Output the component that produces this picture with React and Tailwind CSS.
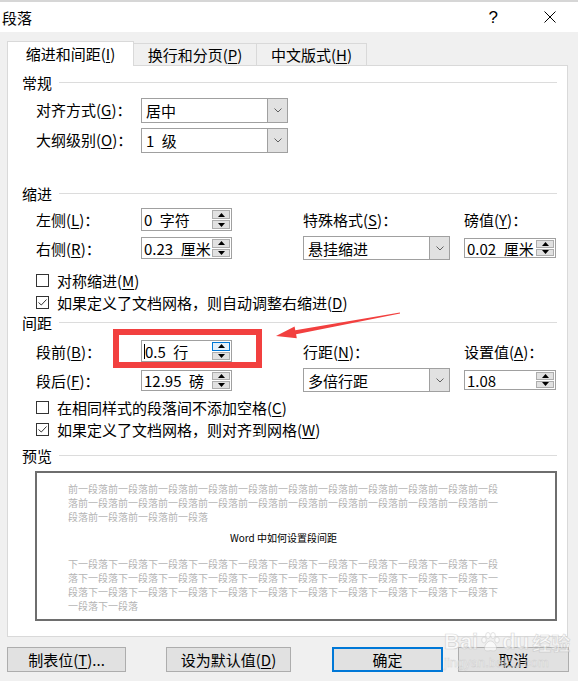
import React from "react";

const Key = ({ k }) => <span className="underline underline-offset-[2px]">{k}</span>;

// 带助记键的标签
const Lbl = ({ t, k, colon = true }) => (
  <span className="whitespace-nowrap leading-none">
    {t}(<Key k={k} />){colon ? "：" : ""}
  </span>
);

const SP = "\u2002";

function Spinner({ value, className, active, caret }) {
  return (
    <div className={`flex border border-[#a0a0a0] bg-white ${className}`}>
      <div className="flex-1 flex items-center pl-[2px] leading-none whitespace-nowrap overflow-hidden">
        {caret && <span className="w-px h-[15px] bg-black" />}
        {value}
      </div>
      <div className="flex flex-col w-[19px] py-[1px] pr-[1px] gap-px">
        <div
          className={`flex-1 flex items-center justify-center border ${
            active ? "border-[#0078d7] bg-[#e5f1fb]" : "border-[#adadad] bg-[#e1e1e1]"
          }`}
        >
          <svg width="7" height="4" viewBox="0 0 7 4">
            <path d="M0 4L3.5 0L7 4Z" fill="#000" />
          </svg>
        </div>
        <div className="flex-1 flex items-center justify-center border border-[#adadad] bg-[#e1e1e1]">
          <svg width="7" height="4" viewBox="0 0 7 4">
            <path d="M0 0L7 0L3.5 4Z" fill="#000" />
          </svg>
        </div>
      </div>
    </div>
  );
}

function Select({ value, className }) {
  return (
    <div className={`flex border border-[#a0a0a0] bg-white ${className}`}>
      <div className="flex-1 flex items-center pl-[4px] leading-none whitespace-nowrap">{value}</div>
      <div className="w-[20px] flex items-center justify-center bg-[#e1e1e1] border-l border-[#a0a0a0]">
        <svg width="8" height="5" viewBox="0 0 8 5">
          <path d="M0.5 0.5L4 4L7.5 0.5" fill="none" stroke="#606060" />
        </svg>
      </div>
    </div>
  );
}

function Check({ checked, children }) {
  return (
    <div className="flex items-center h-[22px] ml-[14px]">
      <div className="w-[13px] h-[13px] border border-[#333] bg-white flex items-center justify-center">
        {checked && (
          <svg width="9" height="7" viewBox="0 0 9 7">
            <path d="M0.5 3.5L3.3 6L8.5 0.5" fill="none" stroke="#333" />
          </svg>
        )}
      </div>
      <span className="ml-[8px] whitespace-nowrap leading-none">{children}</span>
    </div>
  );
}

function Section({ title, className }) {
  return (
    <div className={`flex items-center h-[16px] ${className}`}>
      <span className="leading-none">{title}</span>
      <div className="flex-1 h-px bg-[#dcdcdc] ml-[7px] mr-[10px]" />
    </div>
  );
}

function Btn({ children, className, primary }) {
  return (
    <div
      className={`h-[25px] flex items-center justify-center bg-[#e1e1e1] leading-none ${
        primary ? "border-2 border-[#0078d7]" : "border border-[#adadad]"
      } ${className}`}
    >
      {children}
    </div>
  );
}

const prev = "前一段落".repeat(25);
const next = "下一段落".repeat(34);

export default function App() {
  return (
    <div className="relative w-[578px] h-[681px] overflow-hidden bg-[#f0f0f0] text-black text-[15px] font-['Noto_Sans_CJK_SC','Noto_Sans',sans-serif]">
      {/* 顶部残留 */}
      <div className="h-[2px] bg-[#d6d6d6]" />
      {/* 标题栏 */}
      <div className="h-[30px] bg-white flex items-center">
        <span className="ml-[2px] leading-none">段落</span>
        <span className="ml-auto mr-[46px] leading-none text-[17px] font-['Liberation_Sans',sans-serif] font-light">?</span>
        <svg width="12" height="12" viewBox="0 0 12 12" className="mr-[22px]">
          <path d="M0.5 0.5L11.5 11.5M11.5 0.5L0.5 11.5" stroke="#000" strokeWidth="1" />
        </svg>
      </div>

      {/* 标签页 */}
      <div className="flex items-end ml-[7px] mt-[9px] h-[24px]">
        <div className="relative z-10 -mb-px h-[25px] w-[127px] bg-white border-t border-l border-r border-[#d9d9d9] flex items-center justify-center pb-[2px]">
          <Lbl t="缩进和间距" k="I" colon={false} />
        </div>
        <div className="h-[22px] w-[123px] border-t border-r border-[#d9d9d9] flex items-center justify-center">
          <Lbl t="换行和分页" k="P" colon={false} />
        </div>
        <div className="h-[22px] w-[110px] border-t border-r border-[#d9d9d9] flex items-center justify-center">
          <Lbl t="中文版式" k="H" colon={false} />
        </div>
      </div>

      {/* 面板 */}
      <div className="ml-[7px] w-[561px] h-[572px] bg-white border border-[#d9d9d9] pl-[14px] pt-[8px]">
        <Section title="常规" />
        <div className="ml-[14px] mt-[8px] flex items-center h-[25px]">
          <div className="w-[105px]"><Lbl t="对齐方式" k="G" /></div>
          <Select value="居中" className="w-[147px] h-[25px]" />
        </div>
        <div className="ml-[14px] mt-[5px] flex items-center h-[25px]">
          <div className="w-[105px]"><Lbl t="大纲级别" k="O" /></div>
          <Select value={`1${SP}级`} className="w-[147px] h-[25px]" />
        </div>

        <Section title="缩进" className="mt-[32px]" />
        <div className="ml-[14px] mt-[7px] grid grid-cols-[105px_162px_161px_92px] grid-rows-[23px_24px] gap-y-[5px] items-center">
          <Lbl t="左侧" k="L" />
          <Spinner value={`0${SP}字符`} className="w-[91px] h-[23px]" />
          <Lbl t="特殊格式" k="S" />
          <Lbl t="磅值" k="Y" />
          <Lbl t="右侧" k="R" />
          <Spinner value={`0.23${SP}厘米`} className="w-[91px] h-[22px]" />
          <Select value="悬挂缩进" className="w-[147px] h-[24px]" />
          <Spinner value={`0.02${SP}厘米`} className="w-[92px] h-[20px]" />
        </div>
        <div className="mt-[9px]">
          <Check>
            对称缩进(<Key k="M" />)
          </Check>
          <Check checked>
            如果定义了文档网格，则自动调整右缩进(<Key k="D" />)
          </Check>
        </div>

        <Section title="间距" className="mt-[1px]" />
        <div className="ml-[14px] mt-[10px] grid grid-cols-[105px_162px_161px_92px] grid-rows-[22px_24px] gap-y-[6px] items-center">
          <Lbl t="段前" k="B" />
          <Spinner value={`0.5${SP}行`} className="w-[91px] h-[22px]" active caret />
          <Lbl t="行距" k="N" />
          <Lbl t="设置值" k="A" />
          <Lbl t="段后" k="F" />
          <Spinner value={`12.95${SP}磅`} className="w-[91px] h-[21px]" />
          <Select value="多倍行距" className="w-[147px] h-[24px]" />
          <Spinner value="1.08" className="w-[92px] h-[20px]" />
        </div>
        <div className="mt-[4px]">
          <Check>
            在相同样式的段落间不添加空格(<Key k="C" />)
          </Check>
          <Check checked>
            如果定义了文档网格，则对齐到网格(<Key k="W" />)
          </Check>
        </div>

        <Section title="预览" className="mt-[7px]" />
        <div className="ml-[13px] mt-[8px] w-[522px] h-[150px] border-2 border-[#6e6e6e] bg-white pl-[31px] pt-[9px]">
          <div className="w-[431px] text-[10px] leading-[14px] text-[#b4b4b4] break-all">{prev}</div>
          <div className="w-[431px] mt-[7px] text-[10px] leading-[14px] text-center">Word 中如何设置段间距</div>
          <div className="w-[431px] mt-[12px] text-[10px] leading-[14px] text-[#b4b4b4] break-all">{next}</div>
        </div>
      </div>

      {/* 底部按钮 */}
      <div className="flex mt-[10px]">
        <Btn className="ml-[7px] w-[119px]">
          制表位(<Key k="T" />)...
        </Btn>
        <Btn className="ml-[40px] w-[125px]">
          设为默认值(<Key k="D" />)
        </Btn>
        <Btn className="ml-[41px] w-[111px]" primary>
          确定
        </Btn>
        <Btn className="ml-[15px] w-[111px]">取消</Btn>
      </div>

      {/* 红框与箭头标注 */}
      <svg className="absolute left-0 top-0 pointer-events-none" width="578" height="681">
        <rect x="116" y="332" width="143" height="33" fill="none" stroke="#f2403f" strokeWidth="6" />
        <polygon
          points="276,336 294.6,326.4 295.3,330.3 399.9,312.5 400.1,313.5 296.1,334.3 296.8,338.2"
          fill="#f2403f"
        />
      </svg>

      {/* 水印 */}
      <div className="absolute left-[444px] top-[630px] pointer-events-none opacity-60">
        <div className="flex items-center h-[24px] text-white font-bold text-[22px] leading-none font-['Liberation_Sans',sans-serif] [-webkit-text-stroke:0.7px_#c4c4c4]">
          <span>Bai</span>
          <svg width="22" height="22" viewBox="0 0 22 22" className="mx-[1px]">
            <g fill="#fff" stroke="#c4c4c4" strokeWidth="0.8">
              <ellipse cx="5" cy="9" rx="2.3" ry="3" />
              <ellipse cx="9" cy="4.5" rx="2.3" ry="3" />
              <ellipse cx="14" cy="4.5" rx="2.3" ry="3" />
              <ellipse cx="18" cy="9" rx="2.3" ry="3" />
              <path d="M11.5 10C8 10 5 15 5.5 18C6 20.5 9 20 11.5 19.5C14 20 17 20.5 17.5 18C18 15 15 10 11.5 10Z" />
            </g>
          </svg>
          <span>du</span>
          <span className="ml-[3px] text-[19px] font-['Noto_Sans_CJK_SC',sans-serif]">经验</span>
        </div>
        <div className="mt-[2px] text-[13px] leading-none text-white font-['Liberation_Sans',sans-serif] [-webkit-text-stroke:0.5px_#c4c4c4]">
          jingyan.baidu.com
        </div>
      </div>
    </div>
  );
}
